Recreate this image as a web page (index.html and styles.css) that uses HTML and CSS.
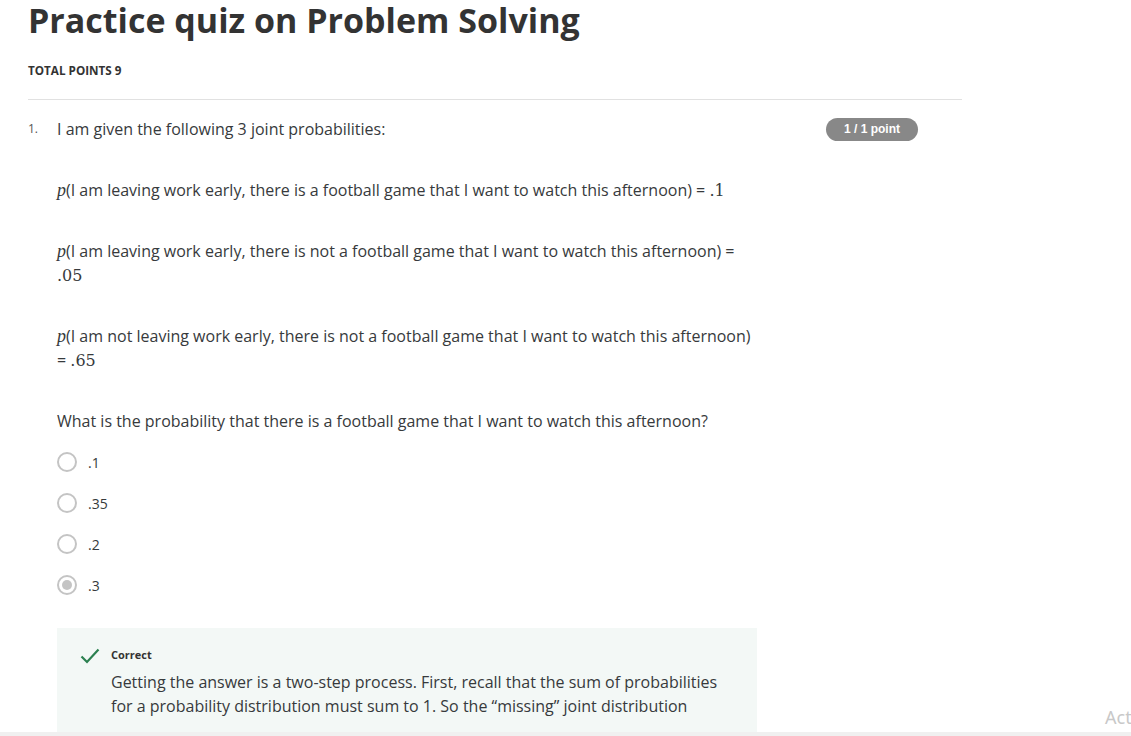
FILE: index.html
```html
<!DOCTYPE html>
<html lang="en">
<head>
<meta charset="utf-8">
<title>Practice quiz on Problem Solving</title>
<link rel="stylesheet" href="styles.css">
</head>
<body>
<main class="page">
  <h1 class="title">Practice quiz on Problem Solving</h1>
  <div class="total-points">TOTAL POINTS 9</div>
  <hr class="divider">
  <section class="question">
    <div class="q-number">1.</div>
    <div class="q-body">
      <div class="q-head">
        <p class="q-prompt">I am given the following 3 joint probabilities:</p>
        <span class="badge">1 / 1 point</span>
      </div>
      <div class="q-content">
        <p class="q-para"><span class="math"><i>p</i></span>(I am leaving work early, there is a football game that I want to watch this afternoon) = <span class="math">.1</span></p>
        <p class="q-para"><span class="math"><i>p</i></span>(I am leaving work early, there is not a football game that I want to watch this afternoon) = <span class="math">.05</span></p>
        <p class="q-para"><span class="math"><i>p</i></span>(I am not leaving work early, there is not a football game that I want to watch this afternoon) = <span class="math">.65</span></p>
        <p class="q-para">What is the probability that there is a football game that I want to watch this afternoon?</p>
      </div>
      <ul class="options">
        <li class="option"><span class="radio"></span><span class="opt-label">.1</span></li>
        <li class="option"><span class="radio"></span><span class="opt-label">.35</span></li>
        <li class="option"><span class="radio"></span><span class="opt-label">.2</span></li>
        <li class="option"><span class="radio radio-checked"></span><span class="opt-label">.3</span></li>
      </ul>
      <div class="feedback">
        <svg class="check" width="20" height="16" viewBox="0 0 20 16" aria-hidden="true"><path d="M1.5 8.5 L7 14 L18.5 1.5" fill="none" stroke="#2b8050" stroke-width="2.2"/></svg>
        <div class="feedback-body">
          <div class="feedback-title">Correct</div>
          <p class="feedback-text">Getting the answer is a two-step process. First, recall that the sum of probabilities for a probability distribution must sum to 1. So the “missing” joint distribution</p>
        </div>
      </div>
    </div>
  </section>
</main>
<div class="watermark">Activate Windows</div>
<div class="bottom-band"></div>
</body>
</html>
```
FILE: styles.css
```css
html, body {
  margin: 0;
  padding: 0;
  height: 736px;
  overflow: hidden;
  background: #ffffff;
}
body {
  font-family: "Open Sans", "Noto Sans", sans-serif;
  color: #373a3c;
  position: relative;
}
.page {
  width: 934px;
  padding-left: 28px;
}
.title {
  margin: 0;
  padding-top: 0;
  font-size: 34px;
  line-height: 40px;
  font-weight: 700;
  color: #333333;
}
.total-points {
  margin-top: 22px;
  font-size: 11.7px;
  line-height: 16px;
  font-weight: 700;
  color: #333333;
}
.divider {
  margin: 21px 0 0;
  border: 0;
  border-top: 1px solid #e1e1e1;
  height: 0;
}
.question {
  display: flex;
  margin-top: 17px;
}
.q-number {
  width: 29px;
  flex: none;
  font-size: 12px;
  line-height: 24px;
  color: #555;
}
.q-body {
  width: 861px;
}
.q-head {
  display: flex;
  justify-content: space-between;
  align-items: center;
}
.q-prompt {
  margin: 0;
  font-size: 16px;
  line-height: 24px;
}
.badge {
  display: inline-block;
  background: #888888;
  color: #fff;
  font-family: "Liberation Sans", Arial, sans-serif;
  font-weight: 700;
  font-size: 12px;
  line-height: 23px;
  height: 23px;
  padding: 0 18px;
  border-radius: 12px;
}
.q-content {
  width: 700px;
  margin-top: 37px;
  display: flex;
  flex-direction: column;
  gap: 37px;
}
.q-para {
  margin: 0;
  font-size: 16px;
  line-height: 24px;
}
.math {
  font-family: "DejaVu Serif", "Liberation Serif", serif;
  font-size: 16px;
  line-height: 1;
}
.math i {
  font-family: "Liberation Serif", serif;
  font-size: 18px;
  line-height: 1;
}
.options {
  list-style: none;
  margin: 17px 0 0;
  padding: 0;
  display: flex;
  flex-direction: column;
  gap: 17px;
}
.option {
  display: flex;
  align-items: center;
  height: 24px;
  font-size: 14px;
}
.radio {
  width: 16px;
  height: 16px;
  border: 2px solid #c4c4c4;
  border-radius: 50%;
  box-sizing: content-box;
  flex: none;
  position: relative;
  margin-right: 11px;
  background: #fff;
}
.radio-checked::after {
  content: "";
  position: absolute;
  left: 3px;
  top: 3px;
  width: 10px;
  height: 10px;
  border-radius: 50%;
  background: #c4c4c4;
}
.feedback {
  margin-top: 31px;
  width: 700px;
  background: #f3f8f6;
  display: flex;
  padding: 20px 0 40px 23px;
  box-sizing: border-box;
}
.check {
  flex: none;
  margin-right: 11px;
}
.feedback-body {
  width: 612px;
}
.feedback-title {
  font-size: 11px;
  font-weight: 700;
  line-height: 14px;
  color: #333;
}
.feedback-text {
  margin: 8px 0 0;
  font-size: 16px;
  line-height: 24px;
}
.watermark {
  position: absolute;
  left: 1105px;
  top: 705px;
  font-family: "Noto Sans", sans-serif;
  font-size: 18px;
  color: #c8c8c8;
  white-space: nowrap;
}
.bottom-band {
  position: absolute;
  left: 0;
  right: 0;
  top: 732px;
  height: 4px;
  background: #f0f0f0;
}
```
